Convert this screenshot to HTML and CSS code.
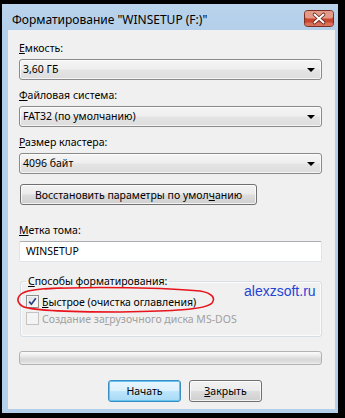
FILE: index.html
```html
<!DOCTYPE html>
<html lang="ru">
<head>
<meta charset="utf-8">
<title>Форматирование</title>
<link rel="stylesheet" href="styles.css">
</head>
<body>
<div class="window">
  <div class="titlebar">
    <span class="title">Форматирование "WINSETUP (F:)"</span>
    <svg class="closebtn" width="30" height="17" viewBox="0 0 30 17">
      <rect x="0.5" y="0.5" width="29" height="16" rx="3" ry="3" fill="#c8462d" stroke="#7c3024"/>
      <rect x="1" y="1" width="28" height="7.5" rx="2" ry="2" fill="#e49a88"/>
      <rect x="1" y="12.5" width="28" height="3.5" rx="2" ry="2" fill="#d8705a"/>
      <path d="M10.5 4.5 L19.5 12.5 M19.5 4.5 L10.5 12.5" stroke="#5e1f15" stroke-width="3.6" stroke-linecap="round" fill="none"/>
      <path d="M10.5 4.5 L19.5 12.5 M19.5 4.5 L10.5 12.5" stroke="#ffffff" stroke-width="2" stroke-linecap="round" fill="none"/>
    </svg>
  </div>
  <div class="client">
    <div class="lbl"><u>Е</u>мкость:</div>
    <div class="combo"><span>3,60 ГБ</span><i class="arrow"></i></div>

    <div class="lbl gap"><u>Ф</u>айловая система:</div>
    <div class="combo"><span>FAT32 (по умолчанию)</span><i class="arrow"></i></div>

    <div class="lbl gap"><u>Р</u>азмер кластера:</div>
    <div class="combo"><span>4096 байт</span><i class="arrow"></i></div>

    <div class="btn restore">Восстановить параметры по умол<u>ч</u>анию</div>

    <div class="lbl gap2"><u>М</u>етка тома:</div>
    <div class="textbox">WINSETUP</div>

    <fieldset class="group">
      <legend><u>С</u>пособы форматирования:</legend>
      <div class="row">
        <span class="check on">
          <svg width="9" height="9" viewBox="0 0 9 9"><path d="M1.2 4.6 L3.4 7.2 L7.8 1.2" stroke="#2a3f86" stroke-width="1.7" fill="none"/></svg>
        </span>
        <span class="rowtext"><u>Б</u>ыстрое (очистка оглавления)</span>
      </div>
      <div class="row disabled">
        <span class="check"></span>
        <span class="rowtext">Создание за<u>г</u>рузочного диска MS-DOS</span>
      </div>
    </fieldset>

    <div class="progress"></div>

    <div class="actions">
      <div class="btn default">Начать</div>
      <div class="btn"><u>З</u>акрыть</div>
    </div>
  </div>
</div>
<div class="watermark">alexzsoft.ru</div>
<svg class="annot" width="345" height="418" viewBox="0 0 345 418">
  <path d="M45 289 C90 286, 170 288, 200 291 C212 293, 216 298, 212 303 C206 310, 170 311, 120 312 C70 312, 30 311, 22 306 C15 301, 17 294, 28 291 C38 289, 50 288, 62 288" stroke="#e8141c" stroke-width="1.6" fill="none" stroke-linecap="round"/>
</svg>
</body>
</html>
```
FILE: styles.css
```css
html, body {
  margin: 0;
  padding: 0;
}
body {
  width: 345px;
  height: 418px;
  background: #000;
  position: relative;
  overflow: hidden;
  font-family: "Noto Sans", "Liberation Sans", sans-serif;
  font-size: 10.5px;
  color: #000;
}
u {
  text-decoration: underline;
  text-underline-offset: 1px;
}
.window {
  margin: 4px 0 0 2px;
  width: 336px;
  height: 409px;
  background: #b3cfea;
  display: flex;
  flex-direction: column;
}
.titlebar {
  height: 26px;
  display: flex;
  align-items: flex-start;
  background: linear-gradient(#b9d3ec, #b4cfe9);
}
.title {
  flex: 1;
  padding: 8px 0 0 10px;
  font-size: 12px;
  line-height: 16px;
  color: #000;
  white-space: nowrap;
}
.closebtn {
  display: block;
  flex: none;
  margin: 6px 4px 0 0;
}
.client {
  margin: 0 3px 0 6px;
  height: 379px;
  box-sizing: border-box;
  background: #f0f0f0;
  padding: 11px 13px 0 11px;
  display: flex;
  flex-direction: column;
}
.lbl {
  height: 15px;
  line-height: 15px;
  white-space: nowrap;
}
.lbl.gap {
  margin-top: 8px;
}
.lbl.gap2 {
  margin-top: 18px;
}
.combo {
  margin-top: 3px;
  height: 21px;
  box-sizing: border-box;
  border: 1px solid #8a8a8a;
  border-radius: 3px;
  background: linear-gradient(#f5f5f5 0%, #eeeeee 48%, #e4e4e4 52%, #dddddd 100%);
  box-shadow: inset 0 0 0 1px rgba(255, 255, 255, 0.7);
  display: flex;
  align-items: center;
  padding: 0 6px 0 3px;
  line-height: 17px;
}
.combo span {
  flex: 1;
}
.arrow {
  width: 0;
  height: 0;
  border-left: 4px solid transparent;
  border-right: 4px solid transparent;
  border-top: 4px solid #000;
  margin-top: 1px;
}
.btn {
  height: 22px;
  box-sizing: border-box;
  border: 1px solid #707070;
  border-radius: 3px;
  background: linear-gradient(#f2f2f2 0%, #ebebeb 48%, #dddddd 52%, #cfcfcf 100%);
  box-shadow: inset 0 0 0 1px rgba(255, 255, 255, 0.75);
  display: flex;
  align-items: center;
  justify-content: center;
  line-height: 16px;
  white-space: nowrap;
}
.restore {
  margin: 10px 0 0 1px;
  width: 237px;
  height: 21px;
}
.textbox {
  margin-top: 3px;
  height: 21px;
  box-sizing: border-box;
  background: #fff;
  border: 1px solid #dfe3ea;
  border-top-color: #abadb3;
  border-radius: 2px;
  padding: 0 6px;
  line-height: 19px;
}
.group {
  margin: 12px 0 0 1px;
  padding: 4px 5px 9px 5px;
  border: 1px solid #d5dfe5;
  border-radius: 3px;
  box-shadow: inset 0 0 0 1px #fbfbfb;
  min-width: 0;
}
.group legend {
  padding: 0 2px;
  line-height: 15px;
  height: 15px;
}
.row {
  height: 17px;
  display: flex;
  align-items: center;
  white-space: nowrap;
}
.check {
  width: 13px;
  height: 13px;
  box-sizing: border-box;
  border: 1px solid #8e8f8f;
  background: linear-gradient(135deg, #d8dbe0, #fdfdfd);
  box-shadow: inset 0 0 0 1px #f4f4f4;
  display: flex;
  align-items: center;
  justify-content: center;
  margin-right: 3px;
}
.check svg {
  display: block;
}
.row.disabled .check {
  border-color: #c4c4c4;
  background: #f4f4f4;
  box-shadow: none;
}
.row.disabled .rowtext {
  color: #a0a0a0;
}
.progress {
  margin-top: 14px;
  height: 14px;
  box-sizing: border-box;
  border: 1px solid #b2b2b2;
  border-radius: 3px;
  background: linear-gradient(#fbfbfb 0%, #ececec 30%, #d8d8d8 60%, #dcdcdc 80%, #eeeeee 100%);
}
.actions {
  margin-top: 15px;
  display: flex;
  gap: 8px;
  padding-left: 89px;
}
.actions .btn {
  width: 73px;
}
.btn.default {
  border-color: #3c8cc4;
  background: linear-gradient(#eaf6fd 0%, #d9f0fc 48%, #bee6fd 52%, #a7d9f5 100%);
  box-shadow: inset 0 0 0 1px #62c5f0;
}
.watermark {
  position: absolute;
  left: 244px;
  top: 283px;
  font-family: "Liberation Sans", Arial, sans-serif;
  font-size: 14px;
  line-height: 16px;
  color: #1f45d6;
}
.annot {
  position: absolute;
  left: 0;
  top: 0;
  pointer-events: none;
}
```
